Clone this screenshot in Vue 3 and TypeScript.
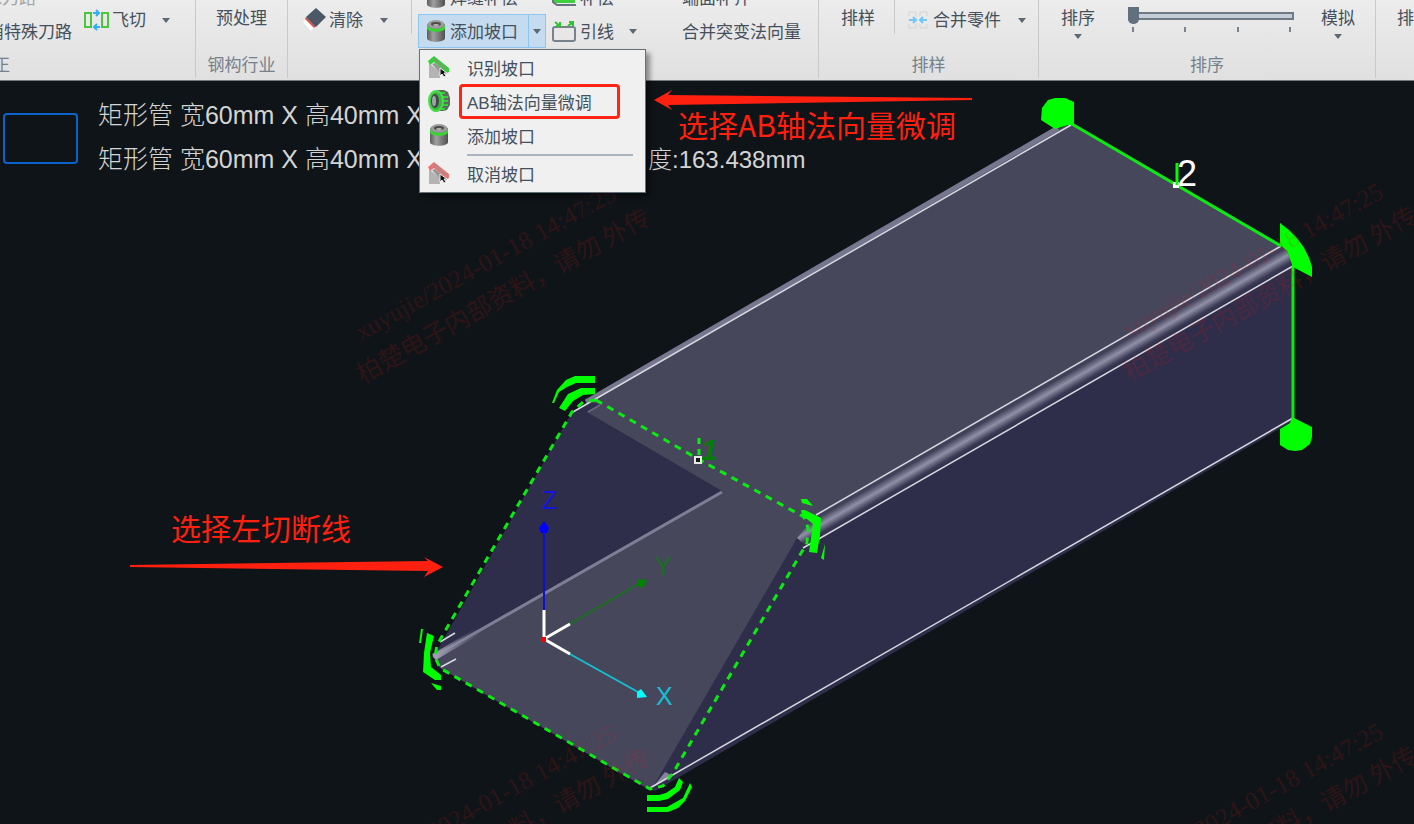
<script setup lang="ts">
import { ref } from 'vue'

interface MenuEntry {
  label: string
  icon: 'detect' | 'axis' | 'cylinder' | 'cancel'
  marked?: boolean
  divided?: boolean
}

const menu: MenuEntry[] = [
  { label: '识别坡口', icon: 'detect' },
  { label: 'AB轴法向量微调', icon: 'axis', marked: true },
  { label: '添加坡口', icon: 'cylinder' },
  { label: '取消坡口', icon: 'cancel', divided: true },
]

const order = ref(0)

const watermarks = [
  { x: 361, y: 341 },
  { x: 1128, y: 339 },
  { x: 361, y: 881 },
  { x: 1128, y: 879 },
]
</script>

<template>
  <div class="app">
    <svg class="defs" aria-hidden="true">
      <defs>
        <linearGradient id="metal" x1="0" x2="1" y1="0" y2="0">
          <stop offset="0" stop-color="#5c5c5c" />
          <stop offset="0.35" stop-color="#a0a0a0" />
          <stop offset="1" stop-color="#505050" />
        </linearGradient>
        <symbol id="ic-cylinder" viewBox="0 0 20 24">
          <path d="M1 6v13c0 5 18 5 18 0V6z" fill="url(#metal)" />
          <path d="M1 5v4c0 5 18 5 18 0V5z" fill="#35d62f" />
          <ellipse cx="10" cy="6" rx="9" ry="4" fill="#8f918f" />
          <ellipse cx="10" cy="5" rx="8" ry="4" fill="#9c9e9c" />
          <ellipse cx="10" cy="5" rx="5" ry="2" fill="#4a4a4a" />
          <ellipse cx="10" cy="6" rx="3" ry="1" fill="#b5b5b5" />
        </symbol>
        <symbol id="ic-detect" viewBox="0 0 22 24">
          <path d="M1 8l11 9v6H1z" fill="#b4b4b4" />
          <path d="M7 8l12 9v2l-5 1L4 9z" fill="#979797" />
          <path d="M0 6L6 1l15 12v4l-2 1L6 7 2 10z" fill="#35d036" />
          <path d="M6 4l12 10" stroke="#7d9a7d" stroke-width="2" />
          <path d="M12 13v8l2-2 2 3 2-1-2-3h3z" fill="#111" stroke="#eee" />
        </symbol>
        <symbol id="ic-cancel" viewBox="0 0 22 24">
          <path d="M1 8l11 9v6H1z" fill="#b4b4b4" />
          <path d="M7 8l12 9v2l-5 1L4 9z" fill="#979797" />
          <path d="M0 6L6 1l15 12v4l-2 1L6 7 2 10z" fill="#ec7474" />
          <path d="M6 4l12 10" stroke="#b08a8a" stroke-width="2" />
          <path d="M12 13v8l2-2 2 3 2-1-2-3h3z" fill="#111" stroke="#eee" />
        </symbol>
        <symbol id="ic-axis" viewBox="0 0 22 24">
          <path d="M8 1h8l4 2 2 6v7l-3 5-4 1H8z" fill="#5f6a60" />
          <path d="M11 4h6M13 8h7M13 12h7M13 16h7M11 20h6" stroke="#36cf3a" stroke-width="2" />
          <ellipse cx="8" cy="12" rx="7" ry="10" fill="#38b83c" stroke="#4edb50" stroke-width="2" />
          <ellipse cx="7" cy="12" rx="4" ry="7" fill="#43464a" />
          <ellipse cx="6" cy="12" rx="2" ry="5" fill="#a0a4aa" />
        </symbol>
      </defs>
    </svg>

    <header class="ribbon">
      <section class="group correct">
        <div class="tools">
          <div class="stack left-stack">
            <button class="tool dim"><span>殊刀路</span></button>
            <button class="tool"><span>消特殊刀路</span></button>
          </div>
          <button class="tool mid fly">
            <svg width="26" height="22" viewBox="0 0 26 22" fill="none">
              <path d="M1 4h6v14H1zM18 4h6v14h-6z" stroke="#4cc63f" stroke-width="2" />
              <path d="M9 4h6M12 1l3 3-3 3M16 18h-6M13 15l-3 3 3 3" stroke="#2eb0f2" stroke-width="2" />
            </svg>
            <span>飞切</span>
            <i class="caret"></i>
          </button>
        </div>
        <h2>正</h2>
      </section>

      <section class="group steel">
        <div class="tools"><button class="tool top">预处理</button></div>
        <h2>钢构行业</h2>
      </section>

      <section class="group bevel">
        <div class="tools">
          <button class="tool mid clear">
            <svg width="24" height="24" viewBox="0 0 24 24">
              <path d="M3 10l9 9-4 4L0 14z" fill="#fff" />
              <path d="M3 9l10 9-2 2L2 11z" fill="#d7534f" />
              <path d="M13 0l10 9-10 10L3 9z" fill="#4c5866" />
            </svg>
            <span>清除</span>
            <i class="caret"></i>
          </button>
          <i class="bar"></i>
          <div class="stack">
            <button class="tool weld">
              <svg width="20" height="24"><use href="#ic-cylinder" /></svg>
              <span>焊缝补偿</span>
            </button>
            <div class="split">
              <button class="tool split-main">
                <svg width="20" height="24"><use href="#ic-cylinder" /></svg>
                <span>添加坡口</span>
              </button>
              <button class="split-drop" aria-label="添加坡口选项"><i class="caret"></i></button>
              <div class="menu" role="menu">
                <button
                  v-for="item in menu"
                  :key="item.label"
                  class="item"
                  :class="{ marked: item.marked, divided: item.divided }"
                  role="menuitem"
                >
                  <svg width="22" height="24"><use :href="'#ic-' + item.icon" /></svg>
                  <span>{{ item.label }}</span>
                </button>
              </div>
            </div>
          </div>
          <div class="stack lead-stack">
            <button class="tool">
              <svg width="25" height="24" viewBox="0 0 25 24" fill="none">
                <path d="M2 10h21v8H2z" fill="#3fcf3f" />
                <path d="M1 10v7l4 3h19" stroke="#66727e" stroke-width="2" />
              </svg>
              <span>补偿</span>
            </button>
            <button class="tool">
              <svg width="25" height="24" viewBox="0 0 25 24" fill="none">
                <rect x="1" y="8" width="22" height="14" rx="2" stroke="#77828d" stroke-width="2" />
                <path d="M3 3l5 4M21 3l-5 4M8 3v4H4M17 3h4v4" stroke="#2fc42f" stroke-width="2" />
              </svg>
              <span>引线</span>
              <i class="caret"></i>
            </button>
          </div>
          <div class="stack">
            <button class="tool"><span>端面补齐</span></button>
            <button class="tool"><span>合并突变法向量</span></button>
          </div>
        </div>
      </section>

      <section class="group nest">
        <div class="tools">
          <button class="tool top">排样</button>
          <i class="bar"></i>
          <button class="tool mid merge">
            <svg width="20" height="18" viewBox="0 0 20 18" fill="none">
              <path d="M1 5V1h7v4M1 13v4h7v-4M12 5V1h7v4M12 13v4h7v-4" stroke="#d0d3d6" />
              <path d="M1 9h7M5 6l3 3-3 3M19 9h-7M15 6l-3 3 3 3" stroke="#6fc8f7" stroke-width="2" />
            </svg>
            <span>合并零件</span>
            <i class="caret"></i>
          </button>
        </div>
        <h2>排样</h2>
      </section>

      <section class="group sort">
        <div class="tools">
          <button class="tool tall">排序<i class="caret"></i></button>
          <label class="slider">
            <input v-model="order" type="range" min="0" max="3" aria-label="排序进度" />
            <span class="ticks"><i></i><i></i><i></i><i></i></span>
          </label>
          <button class="tool tall">模拟<i class="caret"></i></button>
        </div>
        <h2>排序</h2>
      </section>

      <section class="group rest">
        <div class="tools"><button class="tool top">排样</button></div>
      </section>
    </header>

    <main class="view">
      <svg class="scene" viewBox="0 81 1414 743" preserveAspectRatio="xMidYMid slice">
        <defs>
          <linearGradient id="edge" gradientUnits="userSpaceOnUse" x1="1281" y1="246" x2="1296" y2="272">
            <stop offset="0" stop-color="#45445b" />
            <stop offset="0.13" stop-color="#403f58" />
            <stop offset="0.38" stop-color="#9090a8" />
            <stop offset="0.62" stop-color="#3b3a55" />
            <stop offset="0.76" stop-color="#2f2e4a" />
          </linearGradient>
          <linearGradient id="seam" gradientUnits="userSpaceOnUse" x1="433" y1="657" x2="480" y2="630">
            <stop offset="0" stop-color="#a3a2b8" />
            <stop offset="1" stop-color="#7f7e97" stop-opacity="0" />
          </linearGradient>
        </defs>

        <path d="M572 412L590 410 724 491 433 658z" fill="#2f2e4a" />
        <path d="M790 542L1293 264V421L655 791 646 788z" fill="#2f2e4a" />
        <path
          d="M587 412L592 402 1060 128 1071 124 1282 247 815 518 797 538 653 787 648 789 440 668 433 657 722 491z"
          fill="#47475c"
        />
        <path d="M816 515L1281 246 1287 251 1293 266 806 546 797 538z" fill="url(#edge)" />
        <path d="M573 411L587 402 600 404 588 412z" fill="#2f2e4a" />
        <path d="M586 402L1058 128" stroke="#77768f" stroke-width="5" />
        <path d="M433 657L722 492" stroke="#7f7e97" stroke-width="3" />
        <path d="M434 657L480 630" stroke="url(#seam)" stroke-width="7" />
        <path d="M588 412l12-7" stroke="#66657d" stroke-width="2" />
        <path d="M653 787l12-15 8 4z" fill="#85849c" />
        <g stroke="#d8d8e0" stroke-width="1.5" fill="none">
          <path d="M573 412L1071 125M816 515L1281 246M803 548L1293 266M650 788L1293 418" />
          <path d="M440 642l15-9M441 667l15-8" />
        </g>

        <g fill="none" stroke="#0bea12">
          <path
            d="M596 400L698 459 804 517 808 528 807 543 673 773 663 786 650 789 440 668 435 657 437 645 572 412 583 402z"
            stroke-width="3"
            stroke-dasharray="7 6"
          />
          <path d="M699 438v22" stroke-width="3" stroke-dasharray="6 5" />
          <path d="M1072 124L1281 246M1293 266V419" stroke-width="3" />
        </g>
        <g fill="#00ff00">
          <path d="M1042 108L1048 100 1055 98H1065L1074 102V125H1068L1055 129 1041 120z" />
          <path d="M1280 223Q1305 240 1312 267V277L1293 267 1287 251 1280 245z" />
          <path d="M1292 417L1312 427V437L1310 444 1302 450 1295 451 1288 450 1280 445V429L1290 423z" />
          <path d="M595 376H575L566 380 557 390 552 403H554L559 392 567 387 576 383H595z" />
          <path d="M595 388H581L568 394 559 408 565 411 573 401 583 395 595 394z" />
          <path d="M801 499H807L813 506 802 503z" />
          <path d="M801 510H805L821 518 820 535 817 553 809 552 813 524 802 515z" />
          <path d="M825 544L824 560 821 558z" />
          <path d="M421 629L419 643 421 643 423 629z" />
          <path d="M427 633L434 636 430 653 431 667 441 675V680H435L423 672 424 653z" />
          <path d="M431 683L441 686V690H437z" />
          <path d="M679 778L683 782 680 790 668 799 659 801H647V795H659L666 793 675 787z" />
          <path d="M647 807H667L683 798 690 783 692 787 685 801 678 808 668 812H647z" />
        </g>

        <text class="mark one" x="701" y="460">1</text>
        <rect x="695" y="457" width="6" height="6" fill="#141a14" stroke="#e8e8e8" stroke-width="2" />
        <rect x="1173" y="182" width="6" height="6" fill="#fff" />
        <text class="mark two" x="1177" y="186">2</text>
        <path d="M1177 163v22" stroke="#00ff00" stroke-width="3" />

        <g stroke-width="2">
          <path d="M544 612V528" stroke="#0f0fd8" />
          <path d="M568 625L640 583" stroke="#17701c" />
          <path d="M568 653L638 692" stroke="#16bfd0" />
        </g>
        <path d="M544 521l5 7-2 5h-6l-2-5z" fill="#0000ff" />
        <path d="M647 580l-10-1 1 7 5 2z" fill="#008200" />
        <path d="M647 697l-6-8-4 3v6z" fill="#00ffff" />
        <path d="M544 610V639L570 624M544 639L570 654" fill="none" stroke="#fff" stroke-width="3" />
        <rect x="541" y="637" width="5" height="5" fill="#f00" />
        <text class="axis z" x="542" y="509">Z</text>
        <text class="axis y" x="655" y="575">Y</text>
        <text class="axis x" x="656" y="705">X</text>

        <g v-for="(w, i) in watermarks" :key="i" class="watermark" :transform="`translate(${w.x} ${w.y}) rotate(-29)`">
          <text x="0" y="0">xuyujie/2024-01-18 14:47:25</text>
          <text class="cn" x="-19" y="38">柏楚电子内部资料，请勿 外传</text>
        </g>

        <g fill="#ff2010">
          <path d="M654 100L672 90 668 95 972 98V100L668 105 672 110z" />
          <path d="M443 567L424 557 428 561 130 565V567L428 571 424 577z" />
        </g>
        <text class="note" x="678" y="137">选择AB轴法向量微调</text>
        <text class="note" x="171" y="540">选择左切断线</text>
      </svg>

      <div class="info">
        <div class="profile"></div>
        <div class="lines">
          <p>矩形管 宽60mm X 高40mm X</p>
          <p>矩形管 宽60mm X 高40mm X <span class="length">度:163.438mm</span></p>
        </div>
      </div>
    </main>
  </div>
</template>

<style>
html,
body {
  background: #0f1418;
}
</style>

<style scoped>
.app {
  display: flex;
  flex-direction: column;
  height: 100vh;
  overflow: hidden;
  background: #0f1418;
  color: #45505c;
  font-family: "Liberation Sans", "Noto Sans CJK SC", sans-serif;
  font-size: 17px;
}
.defs {
  position: absolute;
  width: 0;
  height: 0;
}
button {
  margin: 0;
  padding: 0;
  border: 0;
  background: none;
  color: inherit;
  font: inherit;
  white-space: nowrap;
}
svg {
  flex: none;
}
.ribbon {
  position: relative;
  z-index: 2;
  display: flex;
  flex: none;
  height: 80px;
  border-bottom: 1px solid #777b7e;
  background: linear-gradient(#ececec, #e0e0e0);
}
.group {
  display: flex;
  flex: none;
  flex-direction: column;
  box-sizing: border-box;
  height: 78px;
  border-right: 1px solid #c9c9c9;
}
.group h2 {
  margin: 0;
  padding-top: 1px;
  color: #76818c;
  font-size: 17px;
  font-weight: 400;
  line-height: 24px;
  text-align: center;
}
.tools {
  display: flex;
  flex: none;
  height: 53px;
}
.tool {
  display: flex;
  align-items: center;
  height: 34px;
  line-height: 24px;
}
.tool span {
  padding-top: 4px;
}
.top {
  margin-top: 2px;
}
.mid {
  margin-top: 3px;
}
.mid span {
  padding-top: 2px;
}
.stack {
  display: flex;
  flex-direction: column;
  margin-top: -20px;
}
.caret {
  width: 0;
  height: 0;
  border: 4px solid transparent;
  border-top: 5px solid #5d6873;
  border-bottom: 0;
}
.bar {
  width: 1px;
  height: 34px;
  background: #c9c9c9;
}
.correct {
  width: 196px;
}
.correct h2 {
  margin-left: -7px;
  text-align: left;
}
.left-stack {
  align-items: flex-end;
  width: 72px;
}
.dim {
  margin-right: 36px;
  color: #a3a3a3;
}
.fly {
  margin-left: 12px;
}
.fly span {
  margin: 0 16px 0 2px;
}
.steel {
  width: 92px;
}
.steel .tools {
  justify-content: center;
}
.bevel {
  width: 531px;
}
.clear {
  margin-left: 15px;
}
.clear span {
  margin: 0 17px 0 2px;
}
.clear + .bar {
  margin: 0 6px 0 23px;
}
.weld {
  padding-left: 8px;
}
.weld span,
.split-main span {
  margin-left: 4px;
}
.split {
  position: relative;
  display: flex;
  box-sizing: border-box;
  height: 34px;
  border: 1px solid #8cc4f2;
  background: #c5dbf0;
}
.split-main {
  height: 32px;
  padding: 0 10px 0 7px;
}
.split-drop {
  display: flex;
  align-items: center;
  justify-content: center;
  width: 17px;
  border-left: 1px solid #8cc4f2;
}
.menu {
  position: absolute;
  top: 34px;
  left: 0;
  box-sizing: border-box;
  width: 227px;
  border: 1px solid #66707a;
  background: #f0f0f0;
  box-shadow: 4px 4px 5px rgba(0, 0, 0, 0.4);
}
.item {
  position: relative;
  display: flex;
  align-items: center;
  width: 100%;
  height: 34px;
  padding-left: 8px;
}
.item span {
  margin-left: 17px;
}
.marked::after {
  position: absolute;
  inset: 0 25px -1px 39px;
  border: 3px solid #ff2413;
  border-radius: 4px;
  content: "";
}
.divided {
  margin-top: 4px;
  margin-bottom: 2px;
}
.divided::before {
  position: absolute;
  top: -2px;
  right: 12px;
  left: 47px;
  height: 2px;
  background: #abb3bf;
  content: "";
}
.lead-stack {
  width: 130px;
  margin-left: 6px;
}
.lead-stack span {
  margin: 0 15px 0 3px;
}
.nest {
  width: 220px;
}
.nest .top {
  margin-left: 22px;
}
.nest .bar {
  margin: 0 13px 0 19px;
}
.merge span {
  margin: 0 17px 0 5px;
}
.sort {
  width: 337px;
}
.sort .tools {
  padding-left: 22px;
}
.tall {
  flex-direction: column;
  height: 40px;
  padding-top: 7px;
}
.tall .caret {
  margin-top: 3px;
}
.slider {
  width: 166px;
  margin: 0 27px 0 33px;
  padding-top: 7px;
}
.slider input {
  display: block;
  width: 100%;
  height: 17px;
  margin: 0;
  appearance: none;
  background: none;
}
.slider input::-webkit-slider-runnable-track {
  box-sizing: border-box;
  height: 8px;
  border: 2px solid #6d7985;
  background: #c5ced8;
}
.slider input::-webkit-slider-thumb {
  width: 11px;
  height: 17px;
  margin: -7px 0 0 -2px;
  appearance: none;
  border-radius: 0 0 5px 5px;
  background: #62707d;
}
.ticks {
  display: flex;
  justify-content: space-between;
  padding: 3px 3px 0 4px;
}
.ticks i {
  width: 2px;
  height: 5px;
  background: #78838e;
}
.rest {
  flex: 1;
  min-width: 0;
  overflow: hidden;
  border: 0;
}
.rest .top {
  margin-left: 21px;
}
.view {
  position: relative;
  flex: 1;
  min-height: 0;
}
.scene {
  position: absolute;
  width: 100%;
  height: 100%;
}
.info {
  position: relative;
  display: flex;
  gap: 20px;
  padding: 12px 3px;
}
.profile {
  box-sizing: border-box;
  width: 75px;
  height: 51px;
  margin-top: 20px;
  border: 2px solid #0a63c9;
  border-radius: 4px;
}
.lines {
  color: #d4d4d4;
  font-size: 25px;
  font-weight: 300;
  line-height: 44px;
  white-space: nowrap;
}
.lines p {
  margin: 0;
}
.length {
  margin-left: 218px;
  font-size: 24px;
}
.note {
  fill: #ff2010;
  font-family: "Noto Sans CJK SC", sans-serif;
  font-size: 30px;
}
.axis {
  font-family: "Liberation Sans", sans-serif;
  font-size: 25px;
}
.axis.z {
  fill: #1414e0;
}
.axis.y {
  fill: #17701c;
}
.axis.x {
  fill: #16bfd0;
}
.mark {
  font-family: "Liberation Sans", sans-serif;
}
.one {
  fill: #047d08;
  font-size: 30px;
  font-style: italic;
  font-weight: 700;
}
.two {
  fill: #fff;
  font-size: 36px;
}
.watermark {
  fill: #d21414;
  fill-opacity: 0.18;
  font-family: "Liberation Serif", serif;
  font-size: 25px;
}
.cn {
  font-family: "Noto Sans CJK SC", sans-serif;
}
</style>
